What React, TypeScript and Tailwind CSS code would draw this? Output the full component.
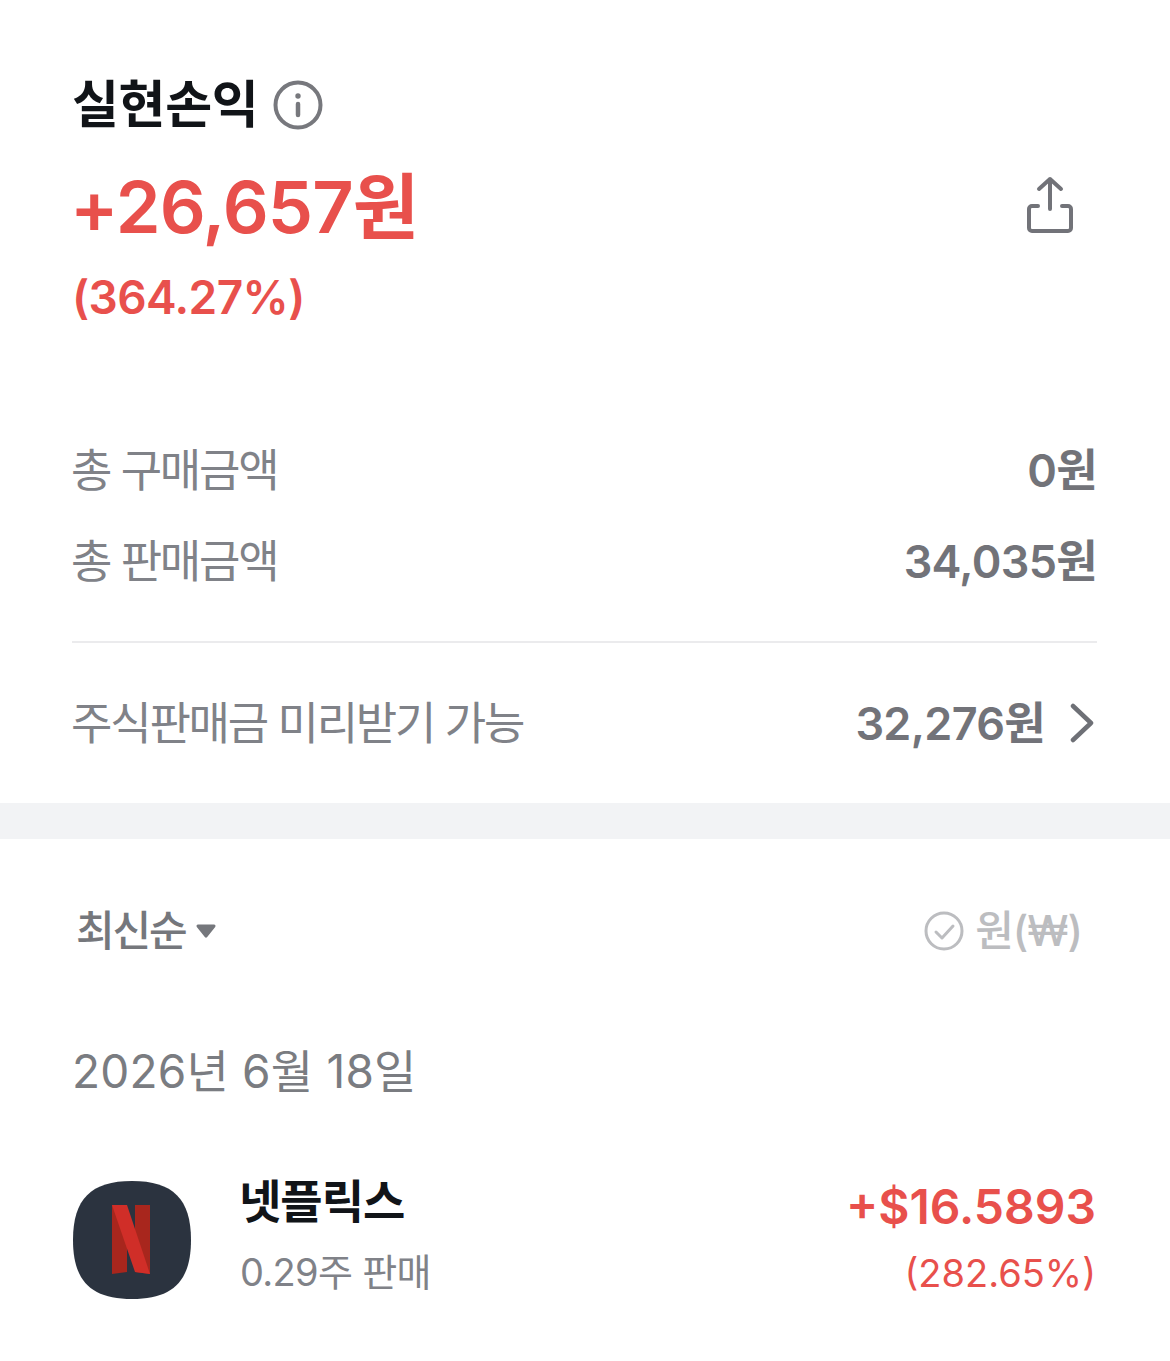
const font = { fontFamily: '"Inter", "Noto Sans CJK KR", sans-serif' };

function Row({ label, value }: { label: string; value: string }) {
  return (
    <div className="flex items-center justify-between h-[91px]">
      <span className="text-[45px] tracking-[-2.2px] text-[#808288] leading-none">{label}</span>
      <span className="text-[45px] tracking-[-0.7px] font-semibold text-[#727379] leading-none">{value}</span>
    </div>
  );
}

export default function App() {
  return (
    <div className="w-[1170px] h-[1361px] bg-white overflow-hidden" style={font}>
      <section className="pl-[72px] pr-[73px] pt-[73px]">
        <div className="flex items-center gap-[15px] h-[62px]">
          <span className="text-[51px] font-semibold tracking-[-0.3px] text-[#111418] leading-none">실현손익</span>
          <svg width="50" height="50" viewBox="0 0 50 50" fill="none" className="text-[#77787d] mt-[1px]">
            <circle cx="25" cy="25" r="22.5" stroke="currentColor" strokeWidth="4" />
            <circle cx="25" cy="16" r="2.7" fill="currentColor" />
            <path d="M25 24v11" stroke="currentColor" strokeWidth="4.5" strokeLinecap="round" />
          </svg>
        </div>
        <div className="flex items-center justify-between mt-[34px] h-[76px]">
          <span className="text-[72px] font-semibold tracking-[-0.9px] text-[#e8504c] leading-none -ml-[2px]">+26,657원</span>
          <svg width="50" height="60" viewBox="0 0 50 60" fill="none" className="mr-[22px] mb-[4px] text-[#727379]" stroke="currentColor" strokeWidth="4" strokeLinecap="round" strokeLinejoin="round">
            <path d="M25 34V4M14 14 25 4l11 10" />
            <path d="M13 31H7a3 3 0 0 0-3 3v19a3 3 0 0 0 3 3h36a3 3 0 0 0 3-3V34a3 3 0 0 0-3-3h-6" />
          </svg>
        </div>
        <div className="mt-[27px] h-[50px] flex items-center text-[46px] font-semibold tracking-[-0.6px] text-[#e8504c] leading-none">(364.27%)</div>
      </section>

      <section className="pl-[71px] pr-[73px] mt-[103px]">
        <Row label="총 구매금액" value="0원" />
        <Row label="총 판매금액" value="34,035원" />
        <div className="h-[2px] bg-[#ebebed] mt-[34px] ml-[1px]" />
        <div className="flex items-center justify-between h-[160px]">
          <span className="text-[45px] tracking-[-2.2px] text-[#808288] leading-none">주식판매금 미리받기 가능</span>
          <div className="flex items-center gap-[24px]">
            <span className="text-[45px] tracking-[-0.7px] font-semibold text-[#727379] leading-none">32,276원</span>
            <svg width="26" height="40" viewBox="0 0 26 40" fill="none" stroke="#6e7076" strokeWidth="4.5" strokeLinecap="round" strokeLinejoin="round" className="mr-[2px]">
              <path d="M4 3l18 17L4 37" />
            </svg>
          </div>
        </div>
      </section>

      <div className="h-[36px] bg-[#f2f3f5]" />

      <section className="pl-[76px] pr-[88px] pt-[64px] flex items-center justify-between h-[120px]">
        <div className="flex items-center gap-[10px]">
          <span className="text-[42px] font-medium tracking-[-2.2px] text-[#75777c] leading-none">최신순</span>
          <svg width="22" height="16" viewBox="0 0 22 16">
            <path d="M3 1.5h16a1.5 1.5 0 0 1 1.2 2.4l-8 10a1.5 1.5 0 0 1-2.4 0l-8-10A1.5 1.5 0 0 1 3 1.5z" fill="#75777c" />
          </svg>
        </div>
        <div className="flex items-center gap-[11px]">
          <svg width="40" height="40" viewBox="0 0 40 40" fill="none" stroke="#bcbdc0" strokeWidth="3" strokeLinecap="round" strokeLinejoin="round">
            <circle cx="20" cy="20" r="18" />
            <path d="M12 21l6 6 11-12" />
          </svg>
          <span className="text-[42px] font-medium text-[#bcbdc0] leading-none tracking-[-1px]">원(₩)</span>
        </div>
      </section>

      <section className="pl-[72px] pr-[74px] mt-[81px]">
        <div className="h-[62px] flex items-center text-[46px] tracking-[0.2px] text-[#7a7c81] leading-none">2026년 6월 18일</div>
        <div className="flex items-center justify-between mt-[76px] ml-[1px]">
          <div className="flex items-center gap-[48px]">
            <svg width="118" height="118" viewBox="0 0 118 118">
              <path d="M59 0C100 0 118 18 118 59s-18 59-59 59S0 100 0 59 18 0 59 0z" fill="#2b333f" />
              <path d="M39 24h15v67l-15 2z" fill="#a8261d" />
              <path d="M62 24h15v69l-15-2z" fill="#a8261d" />
              <path d="M39 24h15l23 69-15-2z" fill="#d02e28" />
            </svg>
            <div className="flex flex-col gap-[29px] pb-[11px]">
              <span className="text-[46px] font-semibold tracking-[-1px] text-[#111418] leading-none">넷플릭스</span>
              <span className="text-[38px] text-[#808288] tracking-[-0.7px] leading-none ml-[1px]">0.29주 판매</span>
            </div>
          </div>
          <div className="flex flex-col items-end gap-[23px] pb-[6px]">
            <span className="text-[48px] font-semibold text-[#e8504c] leading-none">+$16.5893</span>
            <span className="text-[38px] text-[#e8504c] leading-none">(282.65%)</span>
          </div>
        </div>
      </section>
    </div>
  );
}
